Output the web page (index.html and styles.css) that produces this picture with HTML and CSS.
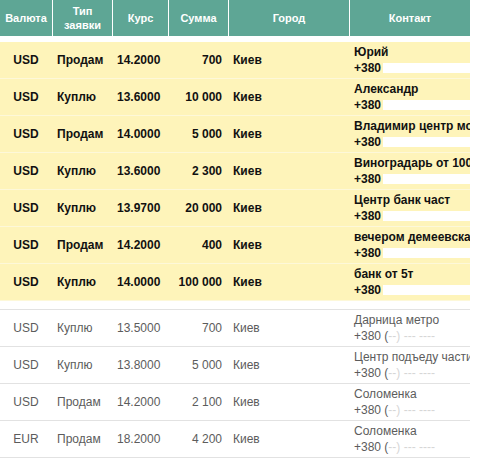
FILE: index.html
```html
<!DOCTYPE html>
<html lang="ru">
<head>
<meta charset="utf-8">
<title>Заявки</title>
<link rel="stylesheet" href="styles.css">
</head>
<body>
<div class="rates">
  <div class="head">
    <div class="hc">Валюта</div>
    <div class="hc">Тип<br>заявки</div>
    <div class="hc">Курс</div>
    <div class="hc">Сумма</div>
    <div class="hc">Город</div>
    <div class="hc">Контакт</div>
  </div>

  <div class="group vip">
    <div class="row"><div class="c cur">USD</div><div class="c">Продам</div><div class="c">14.2000</div><div class="c sum">700</div><div class="c">Киев</div><div class="c contact"><div>Юрий</div><div>+380<span class="mask"></span></div></div></div>
    <div class="row"><div class="c cur">USD</div><div class="c">Куплю</div><div class="c">13.6000</div><div class="c sum">10&nbsp;000</div><div class="c">Киев</div><div class="c contact"><div>Александр</div><div>+380<span class="mask"></span></div></div></div>
    <div class="row"><div class="c cur">USD</div><div class="c">Продам</div><div class="c">14.0000</div><div class="c sum">5&nbsp;000</div><div class="c">Киев</div><div class="c contact"><div>Владимир центр можно</div><div>+380<span class="mask"></span></div></div></div>
    <div class="row"><div class="c cur">USD</div><div class="c">Куплю</div><div class="c">13.6000</div><div class="c sum">2&nbsp;300</div><div class="c">Киев</div><div class="c contact"><div>Виноградарь от 1000</div><div>+380<span class="mask"></span></div></div></div>
    <div class="row"><div class="c cur">USD</div><div class="c">Куплю</div><div class="c">13.9700</div><div class="c sum">20&nbsp;000</div><div class="c">Киев</div><div class="c contact"><div>Центр банк част</div><div>+380<span class="mask"></span></div></div></div>
    <div class="row"><div class="c cur">USD</div><div class="c">Продам</div><div class="c">14.2000</div><div class="c sum">400</div><div class="c">Киев</div><div class="c contact"><div>вечером демеевская</div><div>+380<span class="mask"></span></div></div></div>
    <div class="row"><div class="c cur">USD</div><div class="c">Куплю</div><div class="c">14.0000</div><div class="c sum">100&nbsp;000</div><div class="c">Киев</div><div class="c contact"><div>банк от 5т</div><div>+380<span class="mask"></span></div></div></div>
  </div>

  <div class="group plain">
    <div class="row"><div class="c cur">USD</div><div class="c">Куплю</div><div class="c">13.5000</div><div class="c sum">700</div><div class="c">Киев</div><div class="c contact"><div>Дарница метро</div><div>+380 (<span class="faint">--) --- ----</span></div></div></div>
    <div class="row"><div class="c cur">USD</div><div class="c">Куплю</div><div class="c">13.8000</div><div class="c sum">5&nbsp;000</div><div class="c">Киев</div><div class="c contact"><div>Центр подъеду частично</div><div>+380 (<span class="faint">--) --- ----</span></div></div></div>
    <div class="row"><div class="c cur">USD</div><div class="c">Продам</div><div class="c">14.2000</div><div class="c sum">2&nbsp;100</div><div class="c">Киев</div><div class="c contact"><div>Соломенка</div><div>+380 (<span class="faint">--) --- ----</span></div></div></div>
    <div class="row"><div class="c cur">EUR</div><div class="c">Продам</div><div class="c">18.2000</div><div class="c sum">4&nbsp;200</div><div class="c">Киев</div><div class="c contact"><div>Соломенка</div><div>+380 (<span class="faint">--) --- ----</span></div></div></div>
  </div>
</div>
</body>
</html>
```

FILE: styles.css
```css
html, body {
  margin: 0;
  padding: 0;
  background: #ffffff;
}

body {
  font-family: "Liberation Sans", Arial, sans-serif;
  font-size: 12px;
}

.rates {
  width: 470px;
}

.head,
.row {
  display: grid;
  grid-template-columns: 52px 60px 56px 60px 121px 121px;
}

.head {
  height: 36px;
  background: #5ea695;
  color: #ffffff;
  font-size: 11px;
  font-weight: bold;
  line-height: 14px;
}

.hc {
  display: flex;
  align-items: center;
  justify-content: center;
  text-align: center;
  border-left: 1px solid #ffffff;
}

.hc:first-child {
  border-left: none;
}

.group.vip {
  margin-top: 6px;
}

.group.plain {
  margin-top: 8px;
  border-top: 1px solid #e2e2e2;
}

.row {
  height: 36px;
  border-bottom: 1px solid #e2e2e2;
  align-items: center;
}

.vip .row {
  background: #fef4ba;
  border-bottom-color: #fdf8d9;
  font-weight: bold;
  color: #111111;
}

.plain .row {
  color: #5c5c5c;
}

.c {
  padding-left: 5px;
  white-space: nowrap;
}

.c.cur {
  padding-left: 0;
  text-align: center;
}

.c.sum {
  padding-left: 0;
  padding-right: 6px;
  text-align: right;
}

.contact {
  overflow: hidden;
  line-height: 16px;
}

.mask {
  display: inline-block;
  width: 100px;
  height: 10px;
  margin-left: 2px;
  background: #ffffff;
  vertical-align: -1px;
}

.faint {
  color: #d6d6d6;
}
```
